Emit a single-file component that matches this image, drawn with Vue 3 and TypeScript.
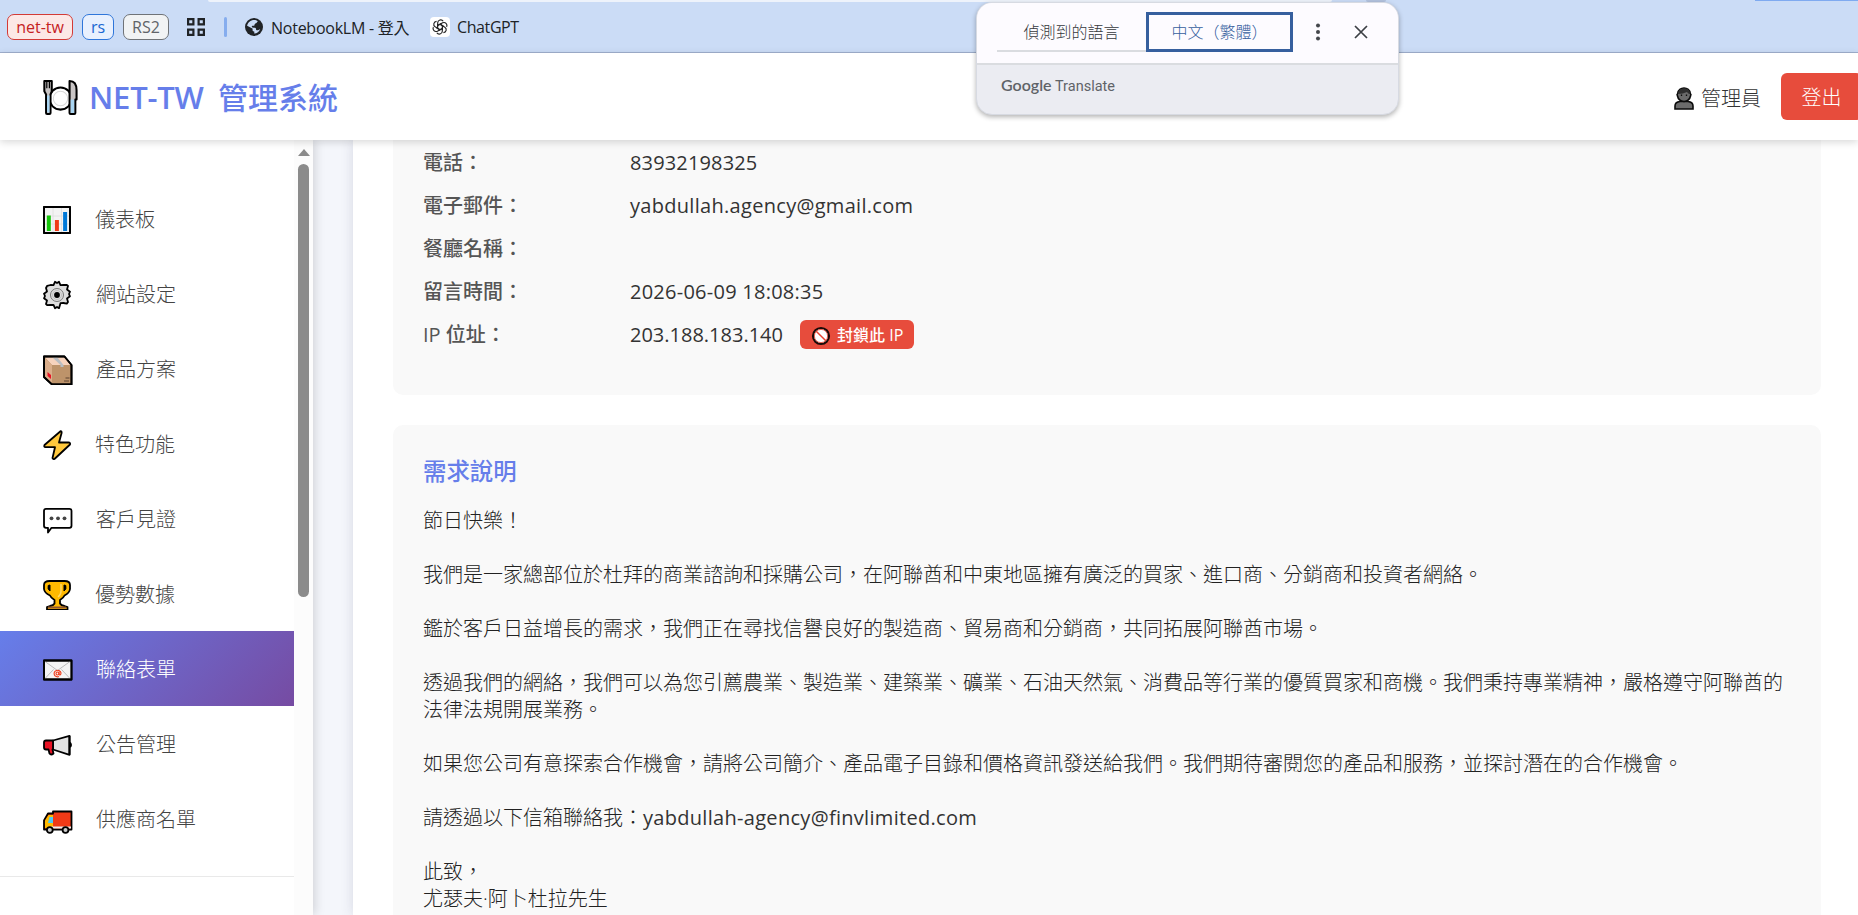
<script setup lang="ts">
interface MenuItem { key: string; label: string; wide?: boolean }
interface InfoRow { label: string; value: string }

const active = 'contact'
const menu: MenuItem[] = [
  { key: 'dashboard', label: '儀表板' },
  { key: 'settings', label: '網站設定', wide: true },
  { key: 'products', label: '產品方案', wide: true },
  { key: 'features', label: '特色功能' },
  { key: 'testimonials', label: '客戶見證', wide: true },
  { key: 'stats', label: '優勢數據' },
  { key: 'contact', label: '聯絡表單', wide: true },
  { key: 'announce', label: '公告管理', wide: true },
  { key: 'suppliers', label: '供應商名單', wide: true },
]
const rows: InfoRow[] = [
  { label: '電話：', value: '83932198325' },
  { label: '電子郵件：', value: 'yabdullah.agency@gmail.com' },
  { label: '餐廳名稱：', value: '' },
  { label: '留言時間：', value: '2026-06-09 18:08:35' },
  { label: 'IP 位址：', value: '203.188.183.140' },
]
const message = `節日快樂！

我們是一家總部位於杜拜的商業諮詢和採購公司，在阿聯酋和中東地區擁有廣泛的買家、進口商、分銷商和投資者網絡。

鑑於客戶日益增長的需求，我們正在尋找信譽良好的製造商、貿易商和分銷商，共同拓展阿聯酋市場。

透過我們的網絡，我們可以為您引薦農業、製造業、建築業、礦業、石油天然氣、消費品等行業的優質買家和商機。我們秉持專業精神，嚴格遵守阿聯酋的法律法規開展業務。

如果您公司有意探索合作機會，請將公司簡介、產品電子目錄和價格資訊發送給我們。我們期待審閱您的產品和服務，並探討潛在的合作機會。
`
</script>

<template>
  <div class="screen">
    <div class="bookmarks">
      <i class="omnibox"></i><i class="avatar-edge"></i><i class="update-edge"></i>
      <span class="chip red">net-tw</span>
      <span class="chip blue">rs</span>
      <span class="chip grey">RS2</span>
      <svg class="apps" viewBox="0 0 20 20" fill="none" stroke="#202326" stroke-width="2.2"><path d="M2.1 2.1h5.3v5.3H2.1zM12.6 2.1h5.3v5.3h-5.3zM2.1 12.6h5.3v5.3H2.1zM12.6 12.6h5.3v5.3h-5.3z" /></svg>
      <i class="bar"></i>
      <svg class="globe" viewBox="0 0 18 18"><circle cx="9" cy="9" r="9" fill="#202326" /><path d="M8.2 2c1.6-.3 3.4.2 4.6 1.2l-1.4 1.9c-.4.6-1.2.3-1.6.8-.5.6.1 1.3-.5 1.7-.8.5-1.7-.1-2.3.5-.5.6-.1 1.2.5 1.5.9.4 2.3-.2 3.1.5.6.5.2 1.5.7 1.9.9.7 2.5-.2 3.9-1.1-.8 2.6-3.3 4.5-5.9 4.7v-2c-.5-.3-1.4-.5-1.7-1.2-.3-.7.3-1.2-.2-1.8L2.1 7.8c.5-2.9 3.1-5.4 6.1-5.8z" fill="#cbdcf6" /></svg>
      <span class="mark nlm">NotebookLM - 登入</span>
      <svg class="gpt" viewBox="0 0 20 20"><rect width="20" height="20" rx="4" fill="#fff" /><g fill="none" stroke="#222" stroke-width="1.15"><path v-for="n in 6" :key="n" :transform="`rotate(${n * 60} 10 10)`" d="M7.7 8.6V5.7a3 3 0 0 1 5.5-1.5M7.7 8.6l2.4-1.4 3.700 2.200" /></g></svg>
      <span class="mark cg">ChatGPT</span>
    </div>

    <header class="top">
      <div class="brand">
        <svg class="plate" viewBox="0 0 34 34" stroke="#000" stroke-width="2" stroke-linejoin="round">
          <circle cx="17" cy="18" r="10.800" fill="#fff" /><circle cx="17" cy="18" r="7" fill="#fff" stroke="#d9d9d9" stroke-width="1" />
          <path d="M1.300 1h7.200v10L7.300 14v18q0 1-1 1H4q-1 0-1-1V14l-1.700-3z" fill="#c9c5c5" /><path d="M3.700 1v7M6.200 1v7" stroke-width="1.200" /><path d="M3.900 15h2.400v16.500H3.900z" fill="#a9d5f2" stroke="none" />
          <path d="M25.800 1c5 0 6.800 4 6.800 9v9h-1.200v13q0 1-1 1h-3.600q-1 0-1-1z" fill="#c9c5c5" /><path d="M26.900 19h3.400v13h-3.400z" fill="#a9d5f2" stroke="none" />
        </svg>
        <h1><span class="latin">NET-TW</span> 管理系統</h1>
      </div>
      <div class="user">
        <svg class="person" viewBox="0 0 20 23" stroke="#0b0b0b" stroke-width="1.600" fill="#6b6b6b"><path d="M1 22v-3q0-4 5-4.500h8q5 .5 5 4.500v3z" /><path d="M3.500 9q-1-1.500.2-2.500C4 3 7 1 10 1s6 2 6.300 5.500Q17.500 7.500 16.500 9 15.500 14 10 14.500 4.500 14 3.500 9z" /><path d="M4 7Q4 2 10 1.500T16 7q-2 0-3-2-4 2-9 2z" fill="#2f2f2f" stroke="none" /><path d="M7.500 7.500v1.500M12.500 7.500v1.500" stroke-width="1.300" /></svg>
        <span class="name">管理員</span>
        <button class="logout">登出</button>
      </div>
    </header>

    <div class="body">
      <aside class="side">
        <nav class="menu">
          <a v-for="m in menu" :key="m.key" class="item" :class="{ on: m.key === active, wide: m.wide }">
            <svg class="ico" viewBox="0 0 30 30" stroke="#000" stroke-width="1.800" stroke-linejoin="round" fill="none">
              <template v-if="m.key === 'dashboard'">
                <path d="M1 2h26v26H1z" fill="#f3f3f3" /><path d="M10 3v24M18.500 3v24M2 11h24M2 19h24" stroke="#ddd" stroke-width=".8" />
                <path d="M3.800 10.500h4V26h-4z" fill="#16c60c" stroke="none" /><path d="M11.900 15h4v11h-4z" fill="#f03a17" stroke="none" /><path d="M20.100 7h4v19h-4z" fill="#0078d7" stroke="none" /><path d="M1 2h26v26H1z" stroke-width="1.800" />
              </template>
              <template v-else-if="m.key === 'settings'">
                <path d="M10.500 5.200 12 1.800 14 3l2-1.200 1.500 3.400 3-.2 3.300-.2 1.200 1.200-1 3.500 3 2.200-1 2.300 1 2.300-3 2.200 1 3.500-1.200 1.600-3.300-.6-3 .2L16 28.200 14 27l-2 1.200-1.500-3.400-3 .2-3.300.2L3 24l1-3.500-3-2.200L2 16l-1-2.300 3-2.200L3 8l1.200-2.200 3.300-.8z" fill="#dedede" /><circle cx="14" cy="15" r="6.500" stroke="#777" stroke-width="1" /><circle cx="14" cy="15" r="4.500" stroke="#bbb" stroke-width=".8" /><circle cx="14" cy="15" r="2.900" fill="#000" stroke="none" />
              </template>
              <template v-else-if="m.key === 'products'">
                <path d="M1 1.500h20.500l7 8.500v19.500H9l-8-7.500z" fill="#bd936a" /><path d="M2 2.500h19l6.500 7.500H9z" fill="#f7d3bd" stroke="none" /><path d="M2 3l7 7v18L2 21.500z" fill="#d9ad8a" stroke="none" /><path d="M9.500 2.500h5l6 7.500v2h-3v-2z" fill="#b9bdc1" stroke="none" /><path d="M4.500 17l3.500 3v4l-3.500-3z" fill="#e81224" stroke="none" /><path d="M22.500 23h4M21 26h5" stroke="#5c4330" stroke-width="1" /><path d="M1 1.500h20.500l7 8.500v19.500H9l-8-7.500z" />
              </template>
              <path v-else-if="m.key === 'features'" d="M17.500 1.200 1.500 15q-.8 2 1 2.200h9.500L9.500 28q1 2 2.500.5L27 14.500q.5-2-1.500-2H16L18.600 3q.2-2-1.100-1.800z" fill="#ffc83d" />
              <template v-else-if="m.key === 'testimonials'">
                <path d="M3 3.800h23.500q2 0 2 2v15q0 2-2 2h-18L5 27.500v-4.700H3q-2 0-2-2v-15q0-2 2-2z" fill="#fff" /><g fill="#444" stroke="none"><circle cx="8.500" cy="13.300" r="1.900" /><circle cx="15" cy="13.300" r="1.900" /><circle cx="21.500" cy="13.300" r="1.900" /></g>
              </template>
              <template v-else-if="m.key === 'stats'">
                <path d="M6.500 1h15q5.500 0 5.500 4v4q-.5 4-5.500 6.500-1 2.500-4.500 4.500v3.500q1 2 4.500 2.500l3 1v3H4v-3l3-1q3.500-.5 4.500-2.500V20Q8 18 7 15.500 1.500 13 1 9V5q0-4 5.500-4z" fill="#ffb900" /><path d="M5.200 5.500q-1 4 1.800 5.500V5z" fill="#000" stroke-width="1" /><path d="M22.800 5.500q1 4-1.800 5.500V5z" fill="#000" stroke-width="1" /><path d="M18 4v7q0 4-3 6" stroke="#ffd766" stroke-width="1.500" /><path d="M5 26.500h18v2H5z" fill="#8e562e" stroke="none" />
              </template>
              <template v-else-if="m.key === 'contact'">
                <path d="M1 5.500h27.500v19H1z" fill="#f4f4f4" /><path d="M2 6.500l12.500 9 12.500-9M2 23.500l8.500-9M27 23.500l-8.500-9" stroke="#bbb" stroke-width="1" /><g stroke="#f03a17" stroke-width="1.100"><circle cx="14.500" cy="18.500" r="1.500" /><path d="M16 16.800v2.200q.3 1.300 1.300.8.800-.6.700-2a3.500 3.300 0 1 0-2 3.800" /></g><path d="M1 5.500h27.500v19H1z" />
              </template>
              <template v-else-if="m.key === 'announce'">
                <path d="M10 10.500 26.500 5.800v19L10 19.500z" fill="#e3e3e3" /><path d="M3 10.500h7v9H9.500l1 4q-2.500 2-4 0l-1-4H3q-2 0-2-2v-5q0-2 2-2z" fill="#e81224" /><path d="M27 12.500q2 2.500 0 4.500" /><path d="M26.500 5.800v19" stroke-width="2" />
              </template>
              <template v-else>
                <path d="M10 6.500h18.500v18H1v-9l4-7h5z" fill="#f03a17" /><path d="M2 23v-7.500L5.500 10H10v13z" fill="#ffb900" stroke="none" /><path d="M6.500 12H10v6H5z" fill="#4cc8f4" stroke="none" /><path d="M8 22.500h20" stroke="#eee" stroke-width="2" /><circle cx="6.800" cy="25" r="2.900" fill="#ccc" /><circle cx="22.500" cy="25" r="2.900" fill="#ccc" />
              </template>
            </svg>
            <span>{{ m.label }}</span>
          </a>
        </nav>
        <div class="track"><i class="arrow"></i><i class="thumb"></i></div>
      </aside>

      <main class="content">
        <div class="card">
          <section class="panel info">
            <div v-for="(r, i) in rows" :key="r.label" class="row">
              <span class="label">{{ r.label }}</span>
              <span class="value" :class="'v' + i">{{ r.value }}</span>
              <button v-if="i === 4" class="block">
                <svg viewBox="0 0 20 20"><circle cx="10" cy="10" r="8" fill="#fff" stroke="#1a0a08" stroke-width="2.200" /><circle cx="10" cy="10" r="6.600" fill="none" stroke="#e8402f" stroke-width=".8" /><path d="M5.200 5.200l9.600 9.600" stroke="#e8402f" stroke-width="1.500" /></svg>
                <span>封鎖此 IP</span>
              </button>
            </div>
          </section>
          <section class="panel need">
            <h2>需求說明</h2>
            <div class="msg">{{ message }}</div>
            <div class="msg mailrow"><span>請透過以下信箱聯絡我：</span><span class="mail">yabdullah-agency@finvlimited.com</span></div>
            <div class="msg sign">此致，<br />尤瑟夫·阿卜杜拉先生</div>
          </section>
        </div>
      </main>
    </div>

    <div class="popup">
      <div class="tabs">
        <span class="tab">偵測到的語言</span>
        <span class="tab sel">中文（繁體）</span>
        <svg class="dots" viewBox="0 0 6 18" fill="#44464b"><circle cx="3" cy="2.500" r="2" /><circle cx="3" cy="9" r="2" /><circle cx="3" cy="15.500" r="2" /></svg>
        <svg class="close" viewBox="0 0 14 14" stroke="#3c3f44" stroke-width="1.700"><path d="M1 1l12 12M13 1L1 13" /></svg>
      </div>
      <div class="foot"><b>Google</b><span>Translate</span></div>
    </div>
  </div>
</template>

<style>
html, body { margin: 0; overflow: hidden; }
</style>
<style scoped>
.screen { position: relative; width: 1858px; height: 915px; overflow: hidden; display: flex; flex-direction: column; background: #fff; color: #333; font-family: "Open Sans", "Noto Sans CJK TC", sans-serif; font-weight: 300; font-size: 20px; box-sizing: border-box; }
.screen * { box-sizing: border-box; }
svg { display: block; flex: none; }
button { border: 0; font: inherit; color: #fff; background: #e74c3c; padding: 0; }
h1, h2 { margin: 0; }
.bookmarks { position: relative; flex: none; height: 53px; padding: 1px 0 0 7px; background: #cbdcf6; border-bottom: 1px solid #a0b0ce; display: flex; align-items: center; font-size: 16px; font-weight: 400; color: #202326; }
.omnibox { position: absolute; left: 208px; top: 0; width: 1124px; height: 2px; background: #eef3fb; border-radius: 0 0 6px 6px; }
.avatar-edge { position: absolute; left: 1366px; top: 0; width: 20px; height: 2px; background: #b3c2de; border-radius: 0 0 10px 10px; }
.update-edge { position: absolute; left: 1755px; top: 0; width: 110px; height: 1px; background: #7faaf0; }
.chip { height: 26px; border: 1.5px solid; border-radius: 7px; line-height: 24px; text-align: center; margin-right: 9px; white-space: nowrap; }
.red { width: 66px; color: #c5221f; border-color: #d33a36; background: #fce8e6; }
.blue { width: 32px; color: #1967d2; border-color: #2f76da; background: #e8f0fe; }
.grey { width: 46px; color: #5f6368; border-color: #6f7378; background: #f1f3f4; }
.apps { width: 20px; height: 20px; margin-left: 8px; }
.bar { width: 3px; height: 20px; margin-left: 18px; background: #86adee; border-radius: 2px; }
.globe { width: 18px; height: 18px; margin-left: 18px; }
.mark { white-space: nowrap; }
.nlm { margin-left: 8px; width: 158px; margin-right: -8px; letter-spacing: -.25px; }
.gpt { width: 20px; height: 20px; margin-left: 9px; }
.cg { margin-left: 7px; letter-spacing: -.4px; }
.top { position: relative; z-index: 3; flex: none; height: 87px; background: #fff; box-shadow: 0 2px 8px rgba(0,0,0,.16); display: flex; justify-content: space-between; padding-left: 43px; }
.brand { display: flex; align-items: center; padding-top: 2px; }
.plate { width: 35px; height: 35px; }
h1 { display: flex; gap: 9px; align-items: baseline; margin-left: 11px; font-size: 30px; line-height: 40px; font-weight: 500; color: #667eea; white-space: nowrap; }
h1 .latin { width: 120px; font-size: 31px; font-weight: 600; letter-spacing: -.2px; }
.user { display: flex; align-items: center; width: 186px; flex: none; }
.person { width: 20px; height: 23px; margin-left: 2px; margin-top: 3px; }
.name { margin-left: 7px; margin-top: 1px; width: 60px; white-space: nowrap; }
.logout { width: 81px; height: 47px; flex: none; margin-left: 20px; border-radius: 6px; background: #e74c3c; }
.body { flex: 1; min-height: 0; display: flex; background: #f4f6fb; }
.side { position: relative; z-index: 2; flex: none; width: 313px; background: #fff; box-shadow: 2px 0 10px rgba(0,0,0,.15); display: flex; }
.menu { width: 294px; height: 737px; padding-top: 41px; border-bottom: 1px solid #e9e9e9; }
.item { display: flex; align-items: center; height: 75px; padding-left: 43px; padding-top: 2px; color: #444; line-height: 30px; }
.item span { margin-left: 22px; }
.item.wide span { margin-left: 23px; }
.item.on { color: #fff; background: linear-gradient(135deg, #667eea, #764ba2); }
.ico { width: 30px; height: 30px; }
.track { width: 19px; background: #fcfcfc; display: flex; flex-direction: column; align-items: center; padding-top: 9px; }
.arrow { border: 6.5px solid transparent; border-top: 0; border-bottom: 7px solid #8b8b8b; }
.thumb { margin-top: 8px; width: 11px; height: 433px; border-radius: 6px; background: #8b8b8b; }
.content { flex: 1; min-width: 0; padding-left: 40px; }
.card { height: 100%; background: #fff; padding: 0 37px 0 40px; box-shadow: 0 0 12px rgba(60,60,100,.16); }
.panel { background: #f9f9f9; padding-left: 30px; }
.info { height: 255px; border-radius: 0 0 10px 10px; }
.row { display: flex; align-items: center; height: 43px; white-space: nowrap; }
.row:first-child { margin-top: 0; }
.label { width: 207px; font-weight: 500; color: #555; }
.value { font-weight: 400; padding-top: 1px; }
.v0 { letter-spacing: .15px; }
.v1 { letter-spacing: .3px; }
.v3 { letter-spacing: .25px; }
.v4 { width: 152px; }
.block { width: 114px; height: 29px; margin: 1px 0 0 18px; border-radius: 6px; display: flex; align-items: center; padding-left: 11px; font-size: 16px; font-weight: 500; }
.block svg { width: 20px; height: 20px; margin-top: 3px; }
.block span { margin-left: 6px; }
.need { margin-top: 30px; height: 520px; border-radius: 10px 10px 0 0; padding-top: 28px; }
h2 { font-size: 23.4px; line-height: 36px; font-weight: 500; color: #667eea; }
.msg { width: 1368px; line-height: 27px; white-space: pre-wrap; color: #222; }
h2 + .msg { margin-top: 18px; }
.mailrow { display: flex; margin-top: 27px; }
.mail { font-weight: 400; color: #333; letter-spacing: .3px; }
.sign { margin-top: 27px; }
.popup { position: absolute; z-index: 5; left: 976px; top: 2px; width: 423px; height: 113px; border: 1px solid #d7dae2; border-radius: 16px; background: #ebecf2; box-shadow: 0 2px 5px rgba(0,0,0,.3); overflow: hidden; font-size: 16px; }
.tabs { height: 62px; background: #fdfbff; border-bottom: 2px solid #dadce0; display: flex; align-items: center; padding-left: 20px; padding-bottom: 2px; }
.tab { width: 149px; height: 40px; line-height: 40px; text-align: center; border-bottom: 2px solid #dadce0; color: #36383c; white-space: nowrap; }
.tab.sel { width: 147px; line-height: 35px; border: 3px solid #365f9e; color: #365f9e; }
.dots { width: 6px; height: 18px; margin-left: 22px; }
.close { width: 14px; height: 14px; margin-left: 33px; }
.foot { display: flex; align-items: baseline; height: 42px; padding: 10px 0 0 24px; line-height: 20px; font-family: Roboto, sans-serif; color: #5f6368; }
.foot b { font-family: Lato, sans-serif; font-size: 16px; font-weight: 600; width: 51px; }
.foot span { margin-left: 3px; font-size: 14.5px; font-weight: 400; }
</style>
